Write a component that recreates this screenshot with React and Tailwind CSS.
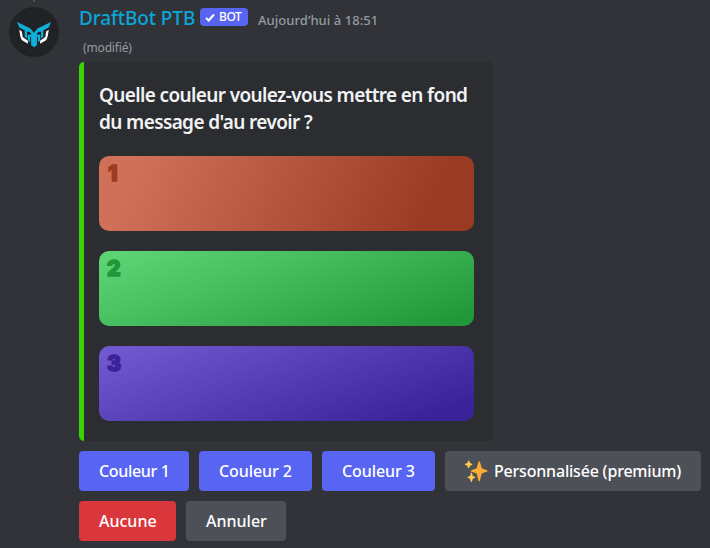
const cards = [
  { n: "1", bg: "bg-[linear-gradient(115deg,#d07058_10%,#9a3a22_88%)]", ink: "text-[#a03a22]", pad: "pl-[9px]" },
  { n: "2", bg: "bg-[linear-gradient(160deg,#5cd474_5%,#22973a_95%)]", ink: "text-[#22973a]", pad: "pl-[8px]" },
  { n: "3", bg: "bg-[linear-gradient(160deg,#7058d0_5%,#3a2298_90%)]", ink: "text-[#3a2298]", pad: "pl-[8px]" },
];

function WingHalf() {
  return (
    <g>
      <path d="M8 15l13.5 6.6 3.6 4.4V40.3l-3-2.1V26.6l-1.6-1.9H18v6.6l-2.2-1.4v-6.3l-5.6-3.4z" fill="#0fb1dc" />
      <path d="M18.8 27.7h3.5v2.1h-1.2v5.4l-2.3-1.6z" fill="#0fb1dc" />
      <path d="M10.2 22.8l2.7 1.6.8 5.6 5.2 3.8v2.9l-6.2-3.6-1.3-3.3z" fill="#fff" />
    </g>
  );
}

function Avatar() {
  return (
    <svg className="block h-[50px] w-[50px]" viewBox="0 0 50 50">
      <circle cx="25" cy="25" r="25" fill="#202225" />
      <WingHalf />
      <g transform="translate(50 0) scale(-1 1)">
        <WingHalf />
      </g>
    </svg>
  );
}

function Sparkles() {
  return (
    <svg className="mr-[6px] ml-[1px] block h-[22px] w-[22px] shrink-0 overflow-visible" viewBox="0 0 36 36">
      <path fill="#FFAC33" d="M34.3 16.9l-8.5-3.2-3.2-11.1a1.1 1.1 0 0 0-2 0l-3.2 11.1-8.5 3.2a1 1 0 0 0 0 2l8.5 3.2 3.2 12.1a1.1 1.1 0 0 0 2 0l3.2-12.1 8.5-3.2a1 1 0 0 0 0-2z" />
      <path fill="#FFCC4D" d="M14.3 27.3l-3.2-1.2-1.2-4.6a1 1 0 0 0-2 0l-1.2 4.6-3.2 1.2a1 1 0 0 0 0 2l3.2 1.2 1.2 4.5a1 1 0 0 0 2 0l1.2-4.5 3.2-1.2a1 1 0 0 0 0-2zM9.8 6.3L6.6 5 5.4 1.8a1 1 0 0 0-2 0L2.2 5-1 6.3a1 1 0 0 0 0 1.9l3.2 1.2 1.2 3.3a1 1 0 0 0 2 0l1.2-3.3 3.2-1.2a1 1 0 0 0 0-1.9z" />
    </svg>
  );
}

function Button({ className, children }) {
  return (
    <button className={"flex h-10 items-center rounded-[4px] pl-5 text-[16px] font-medium whitespace-nowrap text-white " + className}>
      {children}
    </button>
  );
}

export default function App() {
  return (
    <div className="flex h-[548px] w-[710px] overflow-hidden bg-[#313338] font-['Noto_Sans','Open_Sans',sans-serif]">
      <div className="w-[79px] shrink-0 pl-[9px]">
        <div className="ml-[24px] h-[2px] w-[2px] bg-[#4e5058]" />
        <div className="mt-[5px]">
          <Avatar />
        </div>
      </div>
      <div className="flex flex-col items-start">
        <div className="flex h-[36px] items-start whitespace-nowrap">
          <span className="mt-[4px] w-[121px] text-[19px] leading-[28px] font-medium tracking-[-0.1px] text-[#0ba5d6]">DraftBot PTB</span>
          <span className="mt-[8px] flex h-[18px] w-[48px] items-center rounded-[4px] bg-[#5865f2] pl-[5px] text-[12px] font-medium tracking-[-0.4px] text-white">
            <svg className="mr-[4px] h-[9px] w-[10px]" viewBox="0 0 10 9">
              <path d="M1 5l2.7 2.5L9 1.5" fill="none" stroke="#fff" strokeWidth="2" />
            </svg>
            BOT
          </span>
          <span className="mt-[10px] ml-[10px] text-[13px] leading-[20px] font-medium tracking-[0.05px] text-[#949ba4]">Aujourd’hui à 18:51</span>
        </div>
        <div className="h-[26px] pt-[3px] pl-[4px] text-[12px] leading-[18px] tracking-[-0.15px] text-[#949ba4]">(modifié)</div>
        <div className="h-[379px] w-[415px] rounded-[5px] border-l-[5px] border-[#3bd400] bg-[#2b2d31] pt-[20px] pl-[15px]">
          <div className="text-[19px] leading-[27px] font-semibold tracking-[-0.63px] whitespace-nowrap text-[#f2f3f5]">
            <div>Quelle couleur voulez-vous mettre en fond</div>
            <div>du message d'au revoir ?</div>
          </div>
          <div className="mt-[20px] flex flex-col gap-[20px]">
            {cards.map((c) => (
              <div key={c.n} className={"h-[75px] w-[375px] rounded-[10px] pt-[6px] " + c.bg + " " + c.pad}>
                <div className={"font-['Inter',sans-serif] text-[21px] leading-[23px] font-black [-webkit-text-stroke:1.4px_currentColor] " + c.ink}>{c.n}</div>
              </div>
            ))}
          </div>
        </div>
        <div className="mt-[10px] flex gap-[10px]">
          <Button className="w-[110px] bg-[#5865f2] tracking-[-0.35px]">Couleur 1</Button>
          <Button className="w-[113px] bg-[#5865f2] tracking-[-0.1px]">Couleur 2</Button>
          <Button className="w-[113px] bg-[#5865f2] tracking-[-0.1px]">Couleur 3</Button>
          <Button className="w-[256px] bg-[#4e5058] tracking-[-0.2px]">
            <Sparkles />
            Personnalisée (premium)
          </Button>
        </div>
        <div className="mt-[10px] flex gap-[10px]">
          <Button className="w-[97px] bg-[#da373c]">Aucune</Button>
          <Button className="w-[100px] bg-[#4e5058]">Annuler</Button>
        </div>
      </div>
    </div>
  );
}
